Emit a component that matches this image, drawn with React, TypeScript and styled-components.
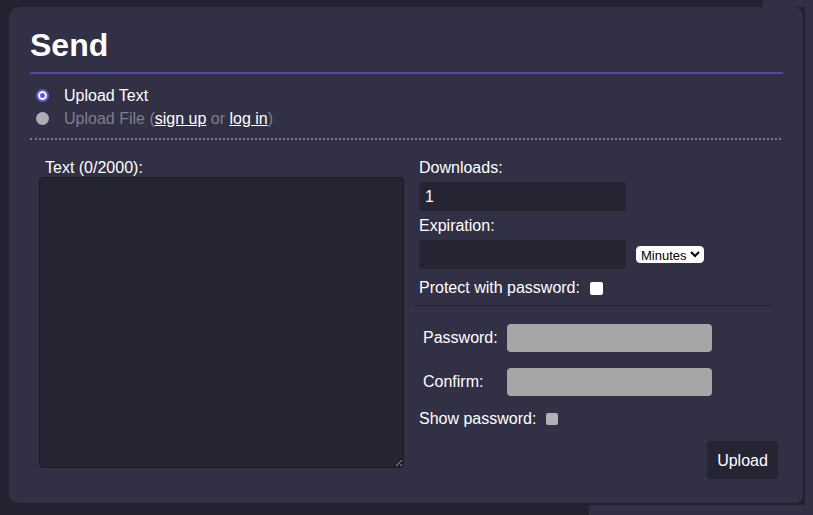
import React, {FC} from "react";
import styled, {createGlobalStyle} from "styled-components";

const panelBg = "#323045";
const darkBg = "#242230";
const fieldBg = "#252433";

const GlobalStyle = createGlobalStyle`
  html, body {
    margin: 0;
    padding: 0;
    height: 100%;
  }
  html {
    background:
      linear-gradient(${panelBg}, ${panelBg}) right top / 8px 100% no-repeat,
      linear-gradient(${panelBg}, ${panelBg}) 763px 0 / 60px 7px no-repeat,
      linear-gradient(${panelBg}, ${panelBg}) 589px 505px / 240px 20px no-repeat,
      ${darkBg};
  }
  body {
    font-family: "Liberation Sans", Arial, sans-serif;
    font-size: 16px;
    color: #fff;
  }
`

const Panel = styled.div`
  width: 796px;
  box-sizing: border-box;
  margin: 7px 0 0 9px;
  padding: 20px 20px 24px 21px;
  background: ${panelBg};
  border-radius: 10px;
  border-right: 2px solid #22202d;
  border-bottom: 2px solid #22202d;
`

const Title = styled.h1`
  margin: 0;
  font-size: 32px;
  line-height: 37px;
  font-weight: bold;
  color: #fff;
`

const TitleRule = styled.div`
  margin-top: 8px;
  height: 2px;
  background: #5049a8;
`

const Modes = styled.div`
  margin-top: 10px;
  display: flex;
  flex-direction: column;
`

const ModeRow = styled.label<{ $disabled?: boolean }>`
  display: flex;
  align-items: center;
  height: 23px;
  gap: 15px;
  padding-left: 6px;
  color: ${p => (p.$disabled ? "#807e8c" : "#fff")};
  line-height: 18px;
`

const Radio = styled.input.attrs({type: "radio"})`
  appearance: none;
  margin: 0;
  width: 13px;
  height: 13px;
  border-radius: 50%;
  box-sizing: border-box;
  background: #adadb3;
  flex: none;

  &:checked {
    background: #fff;
    border: 2px solid #6259d8;
    box-shadow: inset 0 0 0 2px #fff, inset 0 0 0 5px #6259d8;
  }
`

const Link = styled.a`
  color: #fff;
  text-decoration: underline;
`

const DottedRule = styled.div`
  margin-top: 8px;
  border-top: 2px dotted #7a7986;
  margin-right: 2px;
`

const Columns = styled.div`
  margin-top: 19px;
  padding-left: 9px;
  display: grid;
  grid-template-columns: 365px 359px;
  column-gap: 15px;
  align-items: start;
`

const LeftCol = styled.div`
  display: flex;
  flex-direction: column;
`

const Label = styled.label<{ $indent?: number; $top?: number }>`
  display: block;
  line-height: 18px;
  padding-left: ${p => p.$indent || 0}px;
  margin-top: ${p => p.$top || 0}px;
  color: #fff;
  white-space: nowrap;
`

const TextArea = styled.textarea`
  width: 365px;
  height: 291px;
  box-sizing: border-box;
  background: ${fieldBg};
  border: 1px solid #1c1a26;
  border-radius: 4px;
  color: #fff;
  font-family: inherit;
  font-size: 16px;
  outline: none;
`

const RightCol = styled.div`
  display: flex;
  flex-direction: column;
`

const Field = styled.input<{ $gray?: boolean; $w?: number; $h?: number }>`
  width: ${p => p.$w || 207}px;
  height: ${p => p.$h || 29}px;
  box-sizing: border-box;
  margin: 0;
  border: none;
  border-radius: 4px;
  padding: 0 6px;
  background: ${p => (p.$gray ? "#a6a6a6" : fieldBg)};
  color: #fff;
  font-family: inherit;
  font-size: 16px;
  outline: none;
`

const Row = styled.div<{ $top?: number; $gap?: number }>`
  display: flex;
  align-items: center;
  margin-top: ${p => p.$top || 0}px;
  gap: ${p => p.$gap || 0}px;
`

const Select = styled.select`
  height: 17px;
  padding: 0;
  font-family: "Liberation Sans", Arial, sans-serif;
  font-size: 13px;
  background: #fff;
  color: #000;
  border: 1px solid #fff;
  border-radius: 4px;
  outline: none;
`

const Check = styled.input.attrs({type: "checkbox"})<{ $muted?: boolean }>`
  appearance: none;
  margin: 0;
  width: ${p => (p.$muted ? 12 : 13)}px;
  height: ${p => (p.$muted ? 12 : 13)}px;
  border-radius: 2px;
  background: ${p => (p.$muted ? "#b3b2ba" : "#fff")};
  flex: none;
`

const Divider = styled.div`
  margin: 8px 5px 0 -5px;
  height: 1px;
  background: #25232f;
`

const PwBlock = styled.div`
  margin-top: 18px;
  padding-left: 4px;
  display: grid;
  grid-template-columns: 84px 205px;
  row-gap: 16px;
  align-items: center;
`

const UploadButton = styled.button`
  margin-top: 13px;
  align-self: flex-end;
  width: 71px;
  height: 38px;
  border: none;
  border-radius: 4px;
  background: ${fieldBg};
  color: #fff;
  font-family: inherit;
  font-size: 16px;
  padding: 2px 0 0;
`

const App: FC = () => {
    return (
        <React.Fragment>
            <GlobalStyle/>
            <Panel>
                <Title>Send</Title>
                <TitleRule/>

                <Modes>
                    <ModeRow>
                        <Radio name="mode" defaultChecked/>
                        <span>Upload Text</span>
                    </ModeRow>
                    <ModeRow $disabled>
                        <Radio name="mode" disabled/>
                        <span>Upload File (<Link>sign up</Link> or <Link>log in</Link>)</span>
                    </ModeRow>
                </Modes>

                <DottedRule/>

                <Columns>
                    <LeftCol>
                        <Label $indent={6}>Text (0/2000):</Label>
                        <TextArea/>
                    </LeftCol>

                    <RightCol>
                        <Label>Downloads:</Label>
                        <Row $top={5}>
                            <Field defaultValue="1"/>
                        </Row>
                        <Label $top={6}>Expiration:</Label>
                        <Row $top={5} $gap={10}>
                            <Field/>
                            <Select defaultValue="minutes">
                                <option value="minutes">Minutes</option>
                                <option value="hours">Hours</option>
                                <option value="days">Days</option>
                            </Select>
                        </Row>
                        <Row $top={10} $gap={10}>
                            <Label>Protect with password:</Label>
                            <Check/>
                        </Row>
                        <Divider/>
                        <PwBlock>
                            <Label>Password:</Label>
                            <Field type="password" $gray $w={205} $h={28} disabled/>
                            <Label>Confirm:</Label>
                            <Field type="password" $gray $w={205} $h={28} disabled/>
                        </PwBlock>
                        <Row $top={14} $gap={10}>
                            <Label>Show password:</Label>
                            <Check $muted disabled/>
                        </Row>
                        <UploadButton>Upload</UploadButton>
                    </RightCol>
                </Columns>
            </Panel>
        </React.Fragment>
    )
}

export default App;
